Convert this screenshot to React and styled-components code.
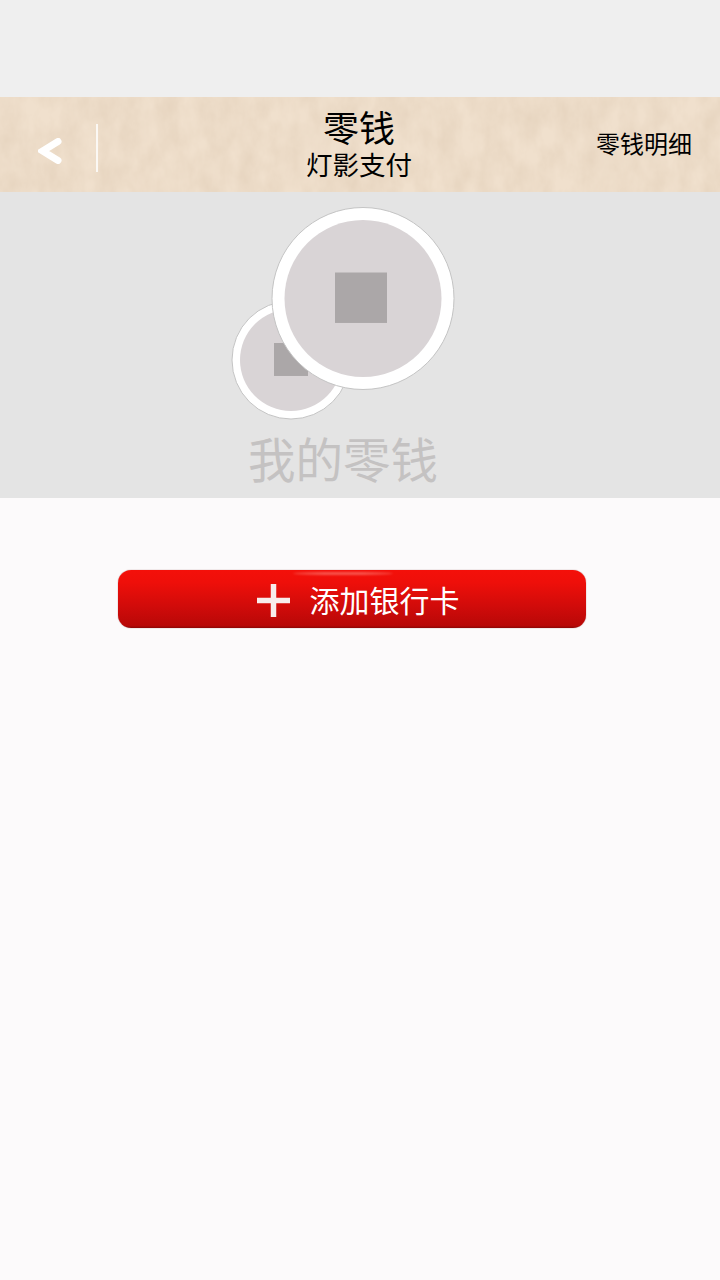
import React from 'react';
import styled, { createGlobalStyle } from 'styled-components';

const GlobalStyle = createGlobalStyle`
  html, body {
    margin: 0;
    padding: 0;
    background: #fcfafb;
  }
  body {
    font-family: "Liberation Sans", "Noto Sans CJK SC", sans-serif;
  }
`;

const Page = styled.div`
  width: 720px;
  min-height: 1280px;
  background: #fcfafb;
  display: flex;
  flex-direction: column;
`;

const StatusBar = styled.div`
  height: 97px;
  background: #efefef;
`;

const Header = styled.header`
  position: relative;
  height: 95px;
  background: #f0e0cd;
  overflow: hidden;
  display: grid;
  grid-template-columns: 1fr auto 1fr;
  align-items: center;
  padding: 0 28px 0 38px;
  box-sizing: border-box;
`;

const PaperGrain = styled.svg`
  position: absolute;
  inset: 0;
  width: 100%;
  height: 100%;
`;

const HeaderLeft = styled.div`
  position: relative;
  display: flex;
  align-items: center;
`;

const BackIcon = styled.svg`
  width: 24px;
  height: 26px;
  margin-top: 13px;
`;

const Divider = styled.div`
  width: 2px;
  height: 48px;
  margin: 7px 0 0 34px;
  background: #fbf8f4;
`;

const TitleBlock = styled.div`
  position: relative;
  display: flex;
  flex-direction: column;
  align-items: center;
  margin: 1px 0 0 -12px;
  color: #000;
`;

const Title = styled.div`
  font-size: 36px;
  line-height: 41px;
`;

const SubTitle = styled.div`
  font-size: 26.5px;
  line-height: 32px;
`;

const DetailLink = styled.a`
  position: relative;
  justify-self: end;
  font-size: 24px;
  line-height: 30px;
  color: #000;
`;

const Hero = styled.section`
  height: 306px;
  box-sizing: border-box;
  padding: 15px 34px 0 0;
  background: #e4e4e4;
  display: flex;
  flex-direction: column;
  align-items: center;
`;

const Coins = styled.svg`
  width: 238px;
  height: 214px;
  display: block;
`;

const HeroLabel = styled.div`
  margin-top: 12px;
  font-size: 47.5px;
  line-height: 58px;
  color: #c4c2c2;
`;

const Body = styled.main`
  padding: 72px 134px 0 118px;
`;

const AddCardButton = styled.button`
  position: relative;
  width: 468px;
  height: 58px;
  padding: 0 0 0 12px;
  border: 0;
  border-radius: 13px;
  background: linear-gradient(#f4100a 0%, #ee0f0a 22%, #cf0b0a 65%, #b80807 96%, #8c0606 100%);
  box-shadow: 0 0 1px rgba(90, 0, 0, 0.7);
  color: #fff;
  font-family: inherit;
  display: flex;
  align-items: center;
  justify-content: center;
  gap: 20px;

  /* soft shine along the top edge */
  &::after {
    content: '';
    position: absolute;
    top: 2px;
    left: 175px;
    width: 100px;
    height: 3px;
    border-radius: 50%;
    background: rgba(255, 190, 180, 0.4);
    filter: blur(1px);
  }
`;

const PlusIcon = styled.svg`
  width: 33px;
  height: 33px;
  margin-top: 2px;
`;

const ButtonLabel = styled.span`
  font-size: 30px;
  line-height: 36px;
  margin-top: 5px;
`;

function Coin({ cx, cy, r, rim, square, squareShift = 0 }) {
  return (
    <g>
      <circle cx={cx} cy={cy} r={r} fill="#fff" stroke="#c4c4c4" strokeWidth="1" />
      <circle cx={cx} cy={cy} r={r - rim} fill="#d9d4d6" />
      <rect
        x={cx - square / 2 + squareShift}
        y={cy - square / 2}
        width={square}
        height={square * 0.97}
        fill="#aba7a8"
      />
    </g>
  );
}

function App() {
  return (
    <Page>
      <GlobalStyle />
      <StatusBar />
      <Header>
        <PaperGrain aria-hidden="true">
          <filter id="paper" x="0" y="0" width="100%" height="100%">
            <feTurbulence type="fractalNoise" baseFrequency="0.05 0.03" numOctaves="5" seed="23" />
            <feColorMatrix
              type="matrix"
              values="0 0 0 0 0.68  0 0 0 0 0.54  0 0 0 0 0.4  0.6 0 0 0 -0.16"
            />
          </filter>
          <rect width="100%" height="100%" filter="url(#paper)" />
        </PaperGrain>
        <HeaderLeft>
          <BackIcon viewBox="0 0 24 26">
            <path
              d="M20 3.500 L4.500 13 L20 22.500"
              fill="none"
              stroke="#fff"
              strokeWidth="7"
              strokeLinecap="round"
              strokeLinejoin="miter"
            />
          </BackIcon>
          <Divider />
        </HeaderLeft>
        <TitleBlock>
          <Title>零钱</Title>
          <SubTitle>灯影支付</SubTitle>
        </TitleBlock>
        <DetailLink>零钱明细</DetailLink>
      </Header>
      <Hero>
        <Coins viewBox="224 207 238 214">
          <Coin cx={291} cy={360} r={59} rim={8} square={34} />
          <Coin cx={363} cy={298.5} r={91} rim={12.5} square={52} squareShift={-2} />
        </Coins>
        <HeroLabel>我的零钱</HeroLabel>
      </Hero>
      <Body>
        <AddCardButton>
          <PlusIcon viewBox="0 0 33 33">
            <path d="M13.750 0h5.500v13.750H33v5.500H19.250V33h-5.500V19.250H0v-5.500h13.750z" fill="#f8ecec" />
          </PlusIcon>
          <ButtonLabel>添加银行卡</ButtonLabel>
        </AddCardButton>
      </Body>
    </Page>
  );
}

export default App;
